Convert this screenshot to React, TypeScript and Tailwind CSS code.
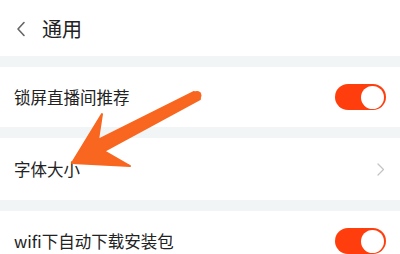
import React from 'react';

const font = { fontFamily: '"Noto Sans CJK SC", "Noto Sans", sans-serif' };

function Toggle() {
  return (
    <div className="w-[51px] h-[26px] rounded-full bg-[#ff3d0d] flex items-center justify-end pr-[2px]">
      <div className="w-[23px] h-[23px] rounded-full bg-white" />
    </div>
  );
}

function Band() {
  return <div className="h-[11px] bg-[#f1f5f5]" />;
}

export default function App() {
  return (
    <div className="relative w-[400px] h-[254px] overflow-hidden bg-white text-[#222]" style={font}>
      {/* Header */}
      <header className="h-[56px] flex items-center pl-[16px] pt-[1px]">
        <svg width="10" height="16" viewBox="0 0 10 16" className="text-[#666]">
          <path d="M8 1.5 L2 8 L8 14.5" fill="none" stroke="currentColor" strokeWidth="1.6" strokeLinecap="round" strokeLinejoin="round" />
        </svg>
        <h1 className="ml-[16px] text-[20px] leading-none">通用</h1>
      </header>

      <Band />
      <div className="h-[60px] flex items-center justify-between pl-[14px] pr-[14px]">
        <span className="text-[16.5px] leading-none">锁屏直播间推荐</span>
        <Toggle />
      </div>

      <Band />
      <div className="h-[62px] flex items-center justify-between pl-[14px] pr-[15px]">
        <span className="text-[16.5px] leading-none">字体大小</span>
        <svg width="8" height="13" viewBox="0 0 8 13" className="text-[#c4c4c4]">
          <path d="M1 1 L6.5 6.5 L1 12" fill="none" stroke="currentColor" strokeWidth="1.3" strokeLinecap="round" strokeLinejoin="round" />
        </svg>
      </div>

      <Band />
      <div className="h-[60px] flex items-center justify-between pl-[14px] pr-[14px]">
        <span className="text-[16.5px] leading-none">wifi下自动下载安装包</span>
        <Toggle />
      </div>

      {/* Annotation arrow */}
      <svg className="absolute left-0 top-0 pointer-events-none" width="400" height="254" viewBox="0 0 400 254">
        <polygon
          points="72,163 102,114 98,140 194,92 200,99 104,151 130,166"
          fill="#f8661f"
          stroke="#f8661f"
          strokeWidth="2"
          strokeLinejoin="round"
        />
        <circle cx="197" cy="95.5" r="4.5" fill="#f8661f" />
      </svg>
    </div>
  );
}
